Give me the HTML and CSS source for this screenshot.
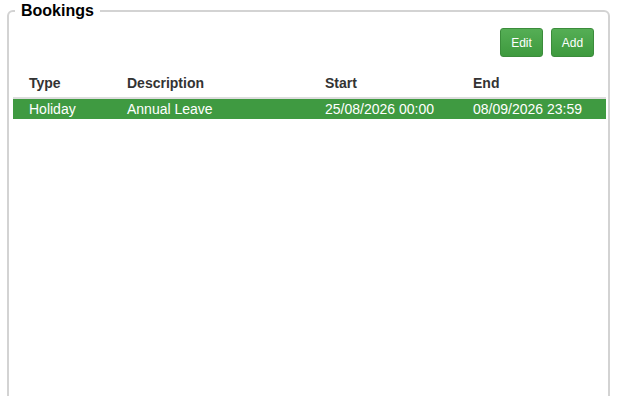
FILE: index.html
```html
<!DOCTYPE html>
<html>
<head>
<meta charset="utf-8">
<link rel="stylesheet" href="styles.css">
</head>
<body>
<fieldset class="panel">
  <legend class="panel-title">Bookings</legend>
  <div class="toolbar">
    <button class="btn">Edit</button>
    <button class="btn">Add</button>
  </div>
  <table class="grid">
    <colgroup>
      <col class="c1"><col class="c2"><col class="c3"><col class="c4">
    </colgroup>
    <thead>
      <tr><th>Type</th><th>Description</th><th>Start</th><th>End</th></tr>
    </thead>
    <tbody>
      <tr class="selected"><td>Holiday</td><td>Annual Leave</td><td>25/08/2026 00:00</td><td>08/09/2026 23:59</td></tr>
    </tbody>
  </table>
</fieldset>
</body>
</html>
```
FILE: styles.css
```css
html, body {
  margin: 0;
  padding: 0;
  background: #fff;
  font-family: "Liberation Sans", Arial, sans-serif;
  overflow: hidden;
}
.panel {
  margin: 0 0 0 7px;
  width: 603px;
  height: 410px;
  box-sizing: border-box;
  border: 2px solid #d3d3d3;
  border-radius: 6px;
  padding: 0 2px 0 4px;
}
.panel-title {
  font-size: 16px;
  font-weight: bold;
  color: #000;
  line-height: 22px;
  padding: 0 6px;
  margin-left: 2px;
}
.toolbar {
  display: flex;
  justify-content: flex-end;
  gap: 8px;
  margin-top: 6px;
  padding-right: 12px;
}
.btn {
  width: 43px;
  height: 29px;
  box-sizing: border-box;
  border: 1px solid #3b8c3b;
  border-radius: 3px;
  background: linear-gradient(#55ae55, #3e9a3e);
  color: #fff;
  font-family: "Liberation Sans", Arial, sans-serif;
  font-size: 12px;
  padding: 0;
}
.grid {
  width: 593px;
  table-layout: fixed;
  border-collapse: collapse;
  margin-top: 11px;
  font-size: 14px;
}
.c1 { width: 98px; }
.c2 { width: 198px; }
.c3 { width: 148px; }
.c4 { width: 149px; }
.grid th {
  text-align: left;
  font-weight: bold;
  color: #333;
  height: 29px;
  padding: 0 0 0 16px;
  vertical-align: middle;
  border-bottom: 2px solid #ddd;
}
.grid td {
  height: 20px;
  padding: 0 0 0 16px;
  line-height: 20px;
  white-space: nowrap;
}
.selected td {
  background: #3f9a41;
  color: #fff;
}
```
